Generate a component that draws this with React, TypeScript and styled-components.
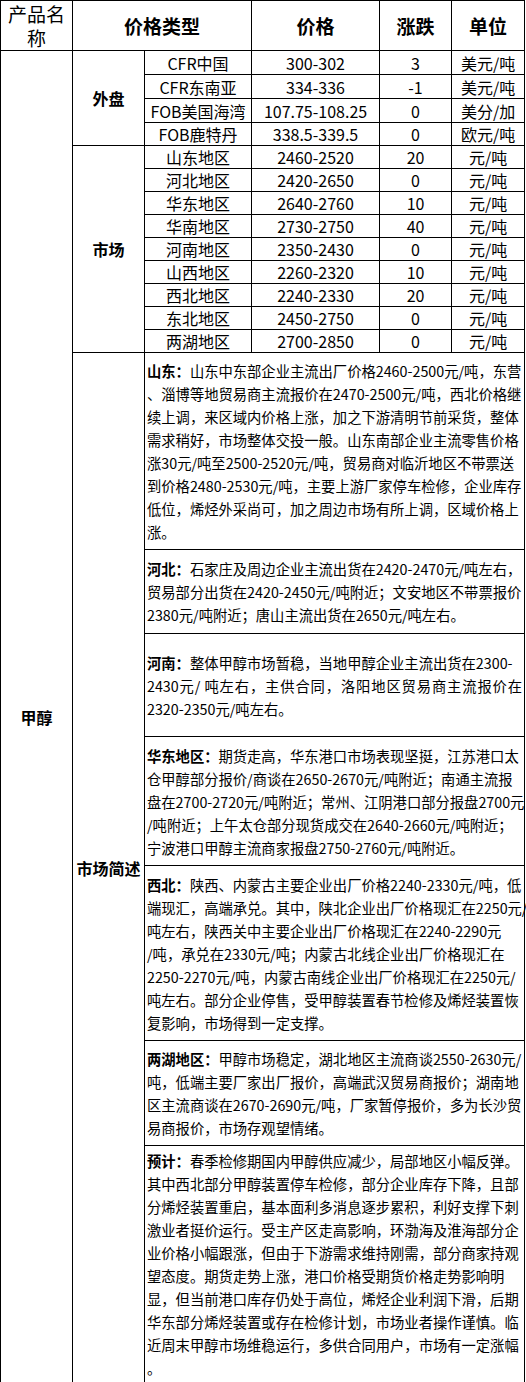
import styled, { createGlobalStyle } from 'styled-components';

const GlobalStyle = createGlobalStyle`
    html, body {
        margin: 0;
        padding: 0;
        background: #fff;
    }
    body {
        font-family: "Noto Sans CJK SC", "Noto Sans", sans-serif;
        color: #000;
    }
`;

const outer = [
    ['CFR中国', '300-302', '3', '美元/吨'],
    ['CFR东南亚', '334-336', '-1', '美元/吨'],
    ['FOB美国海湾', '107.75-108.25', '0', '美分/加'],
    ['FOB鹿特丹', '338.5-339.5', '0', '欧元/吨'],
];

const market = [
    ['山东地区', '2460-2520', '20', '元/吨'],
    ['河北地区', '2420-2650', '0', '元/吨'],
    ['华东地区', '2640-2760', '10', '元/吨'],
    ['华南地区', '2730-2750', '40', '元/吨'],
    ['河南地区', '2350-2430', '0', '元/吨'],
    ['山西地区', '2260-2320', '10', '元/吨'],
    ['西北地区', '2240-2330', '20', '元/吨'],
    ['东北地区', '2450-2750', '0', '元/吨'],
    ['两湖地区', '2700-2850', '0', '元/吨'],
];

type Note = {
    label: string;
    height: number;
    lines: string[];
    spread?: number; // 这一行两端对齐
};

const notes: Note[] = [
    {
        label: '山东：',
        height: 197,
        lines: [
            '山东中东部企业主流出厂价格2460-2500元/吨，东营',
            '、淄博等地贸易商主流报价在2470-2500元/吨，西北价格继',
            '续上调，来区域内价格上涨，加之下游清明节前采货，整体',
            '需求稍好，市场整体交投一般。山东南部企业主流零售价格',
            '涨30元/吨至2500-2520元/吨，贸易商对临沂地区不带票送',
            '到价格2480-2530元/吨，主要上游厂家停车检修，企业库存',
            '低位，烯烃外采尚可，加之周边市场有所上调，区域价格上',
            '涨。',
        ],
    },
    {
        label: '河北：',
        height: 84,
        lines: [
            '石家庄及周边企业主流出货在2420-2470元/吨左右，',
            '贸易部分出货在2420-2450元/吨附近；文安地区不带票报价',
            '2380元/吨附近；唐山主流出货在2650元/吨左右。',
        ],
    },
    {
        label: '河南：',
        height: 103,
        spread: 1,
        lines: [
            '整体甲醇市场暂稳，当地甲醇企业主流出货在2300-',
            '2430元/ 吨左右，主供合同，洛阳地区贸易商主流报价在',
            '2320-2350元/吨左右。',
        ],
    },
    {
        label: '华东地区：',
        height: 129,
        lines: [
            '期货走高，华东港口市场表现坚挺，江苏港口太',
            '仓甲醇部分报价/商谈在2650-2670元/吨附近；南通主流报',
            '盘在2700-2720元/吨附近；常州、江阴港口部分报盘2700元',
            '/吨附近；上午太仓部分现货成交在2640-2660元/吨附近；',
            '宁波港口甲醇主流商家报盘2750-2760元/吨附近。',
        ],
    },
    {
        label: '西北：',
        height: 175,
        lines: [
            '陕西、内蒙古主要企业出厂价格2240-2330元/吨，低',
            '端现汇，高端承兑。其中，陕北企业出厂价格现汇在2250元/',
            '吨左右，陕西关中主要企业出厂价格现汇在2240-2290元',
            '/吨，承兑在2330元/吨；内蒙古北线企业出厂价格现汇在',
            '2250-2270元/吨，内蒙古南线企业出厂价格现汇在2250元/',
            '吨左右。部分企业停售，受甲醇装置春节检修及烯烃装置恢',
            '复影响，市场得到一定支撑。',
        ],
    },
    {
        label: '两湖地区：',
        height: 105,
        lines: [
            '甲醇市场稳定，湖北地区主流商谈2550-2630元/',
            '吨，低端主要厂家出厂报价，高端武汉贸易商报价；湖南地',
            '区主流商谈在2670-2690元/吨，厂家暂停报价，多为长沙贸',
            '易商报价，市场存观望情绪。',
        ],
    },
    {
        label: '预计：',
        height: 237,
        lines: [
            '春季检修期国内甲醇供应减少，局部地区小幅反弹。',
            '其中西北部分甲醇装置停车检修，部分企业库存下降，且部',
            '分烯烃装置重启，基本面利多消息逐步累积，利好支撑下刺',
            '激业者挺价运行。受主产区走高影响，环渤海及淮海部分企',
            '业价格小幅跟涨，但由于下游需求维持刚需，部分商家持观',
            '望态度。期货走势上涨，港口价格受期货价格走势影响明',
            '显，但当前港口库存仍处于高位，烯烃企业利润下滑，后期',
            '华东部分烯烃装置或存在检修计划，市场业者操作谨慎。临',
            '近周末甲醇市场维稳运行，多供合同用户，市场有一定涨幅',
            '。',
        ],
    },
];

function App() {
    return (
        <>
            <GlobalStyle />
            <Sheet>
                <colgroup>
                    <col style={{ width: 72 }} />
                    <col style={{ width: 72 }} />
                    <col style={{ width: 107 }} />
                    <col style={{ width: 128 }} />
                    <col style={{ width: 72 }} />
                    <col style={{ width: 73 }} />
                </colgroup>
                <tbody>
                    <Row $h={50}>
                        <HeadCell $plain>产品名称</HeadCell>
                        <HeadCell colSpan={2}>价格类型</HeadCell>
                        <HeadCell>价格</HeadCell>
                        <HeadCell>涨跌</HeadCell>
                        <HeadCell>单位</HeadCell>
                    </Row>
                    {outer.map((r, i) => (
                        <Row key={r[0]} $h={i === 3 ? 23 : 24}>
                            {i === 0 && (
                                <>
                                    <GroupCell rowSpan={outer.length + market.length + notes.length}>
                                        甲醇
                                    </GroupCell>
                                    <GroupCell rowSpan={outer.length}>外盘</GroupCell>
                                </>
                            )}
                            {r.map((v, j) => (
                                <Cell key={j}>{v}</Cell>
                            ))}
                        </Row>
                    ))}
                    {market.map((r, i) => (
                        <Row key={r[0]} $h={23}>
                            {i === 0 && <GroupCell rowSpan={market.length}>市场</GroupCell>}
                            {r.map((v, j) => (
                                <Cell key={j}>{v}</Cell>
                            ))}
                        </Row>
                    ))}
                    {notes.map((n, i) => (
                        <Row key={n.label} $h={n.height}>
                            {i === 0 && <GroupCell rowSpan={notes.length}>市场简述</GroupCell>}
                            <NoteCell colSpan={4}>
                                {n.lines.map((line, k) => (
                                    <NoteLine key={k} $spread={n.spread === k}>
                                        {k === 0 && <Label>{n.label}</Label>}
                                        {line}
                                    </NoteLine>
                                ))}
                            </NoteCell>
                        </Row>
                    ))}
                </tbody>
            </Sheet>
        </>
    );
}

const Sheet = styled.table`
    width: 525px;
    table-layout: fixed;
    border-collapse: collapse;
    border: 1px solid #000;
`;

const Row = styled.tr<{ $h: number }>`
    height: ${(p) => p.$h}px;
`;

const HeadCell = styled.th<{ $plain?: boolean }>`
    border: 1px solid #000;
    padding: 0 2px;
    font-size: 19px;
    font-weight: ${(p) => (p.$plain ? 400 : 700)};
    line-height: 24px;
    text-align: center;
    vertical-align: middle;
`;

const Cell = styled.td`
    border: 1px solid #000;
    padding: 0 2px;
    font-size: 16px;
    line-height: 20px;
    text-align: center;
    vertical-align: middle;
    white-space: nowrap;
    overflow: hidden;
`;

const GroupCell = styled.td`
    border: 1px solid #000;
    padding: 0 2px;
    font-size: 16px;
    font-weight: 700;
    text-align: center;
    vertical-align: middle;
`;

const NoteCell = styled.td`
    border: 1px solid #000;
    padding: 0 2px;
    vertical-align: middle;
    font-size: 14.3px;
    line-height: 23px;
`;

const NoteLine = styled.span<{ $spread?: boolean }>`
    display: block;
    white-space: nowrap;
    text-align: ${(p) => (p.$spread ? 'justify' : 'left')};
    text-align-last: ${(p) => (p.$spread ? 'justify' : 'auto')};
`;

const Label = styled.strong`
    font-weight: 700;
`;

export default App;
